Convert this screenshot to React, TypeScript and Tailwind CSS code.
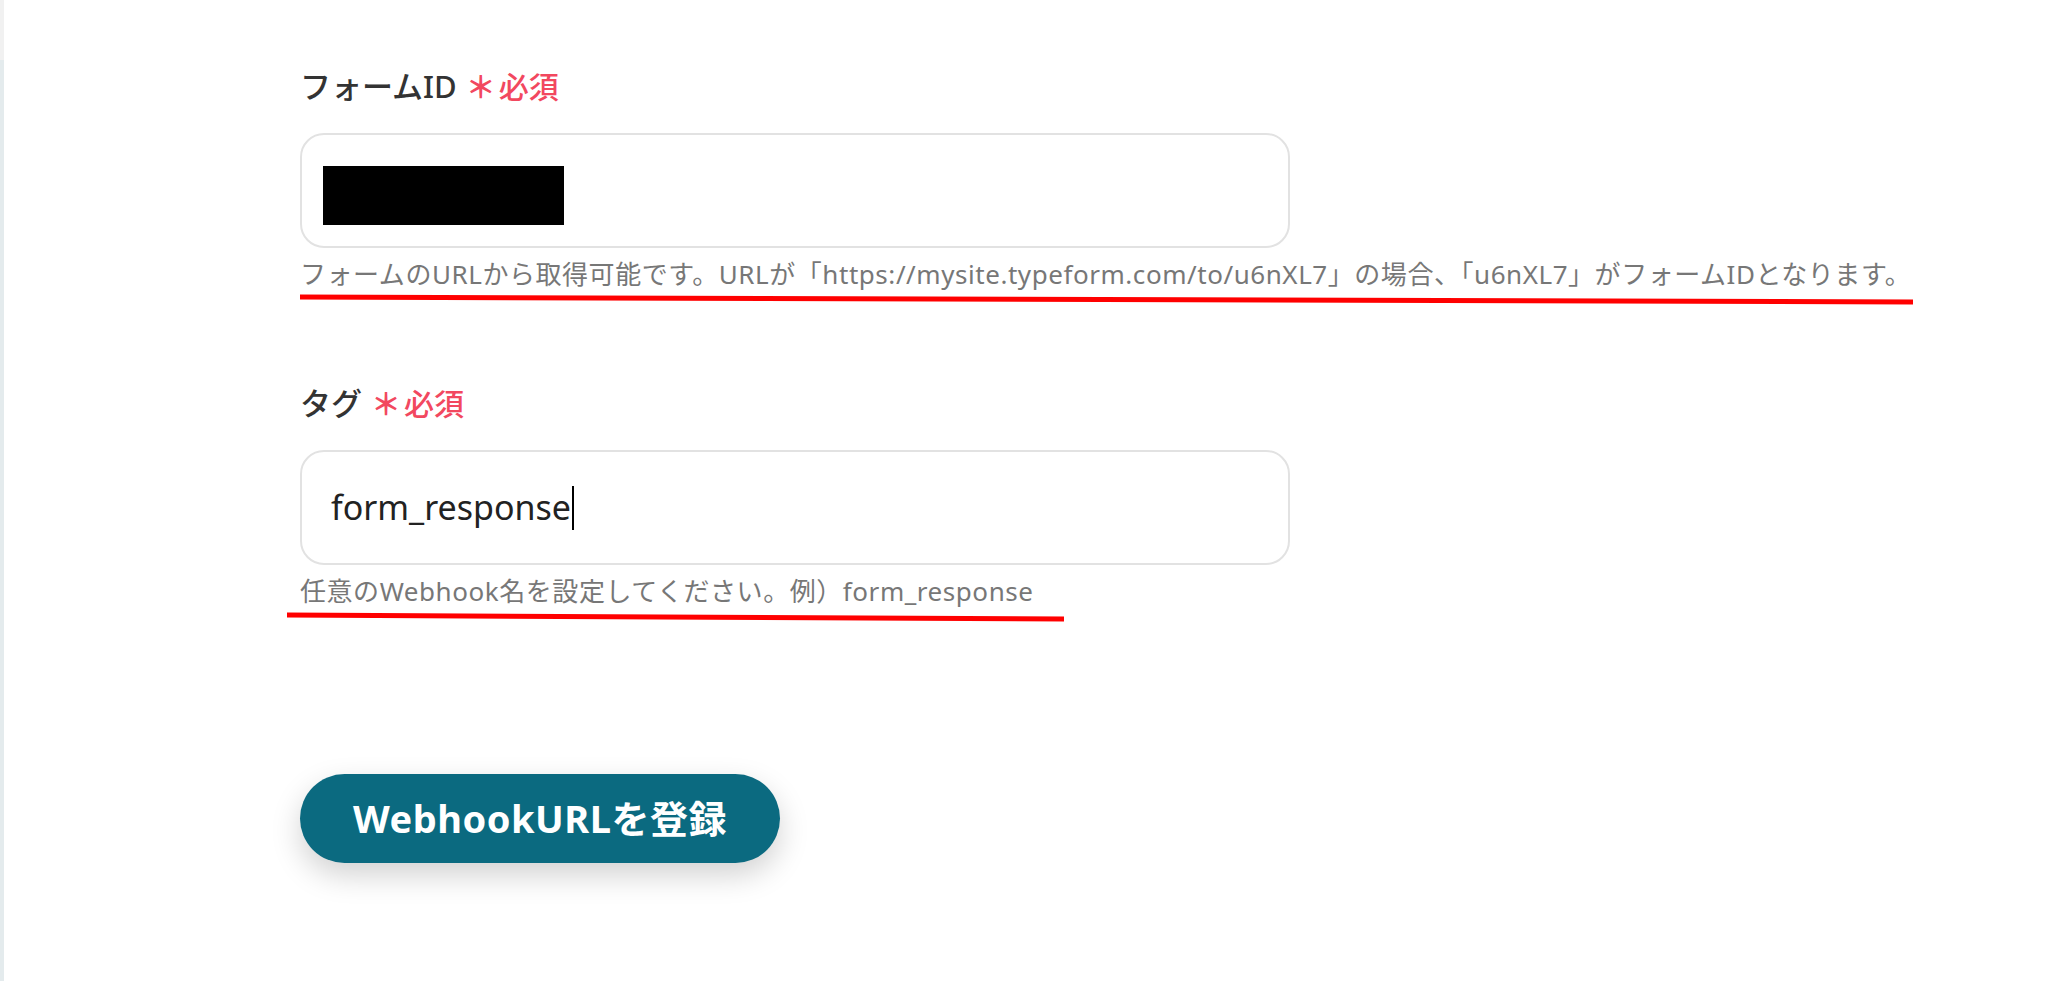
import React from 'react'

const font = { fontFamily: '"Noto Sans", "Noto Sans CJK JP", sans-serif' }

function Required() {
  return (
    <span className="flex items-center gap-[3px] text-[30px] font-medium text-[#f2485f]">
      <span className="font-bold">＊</span>
      <span>必須</span>
    </span>
  )
}

function Underline({ width, tilt }: { width: number; tilt: number }) {
  return (
    <svg width={width} height={14} className="block">
      <line x1={0} y1={5} x2={width} y2={5 + tilt} stroke="#ff0000" strokeWidth={5} />
    </svg>
  )
}

function Field({
  label,
  value,
  caret,
  help,
}: {
  label: string
  value?: string
  caret?: boolean
  help: string
}) {
  return (
    <div>
      <div className="flex h-[42px] items-center gap-[9px] text-[31px] font-medium text-[#333]">
        <span>{label}</span>
        <Required />
      </div>
      <div className="mt-[26px] flex h-[115px] w-[990px] items-center rounded-[24px] border-2 border-[#e2e2e2] bg-white px-[21px]">
        {value === undefined ? (
          <div className="mt-[10px] h-[59px] w-[241px] bg-black" />
        ) : (
          <span className="ml-[8px] flex items-center text-[34px] text-[#222]">
            {value}
            {caret && <span className="ml-[1px] inline-block h-[44px] w-[2px] bg-black" />}
          </span>
        )}
      </div>
      <p className="mt-[8px] h-[36px] whitespace-nowrap text-[26px] leading-[36px] tracking-[0.55px] text-[#777]">
        {help}
      </p>
    </div>
  )
}

export default function App() {
  return (
    <div className="flex h-[981px] w-full bg-white" style={font}>
      <div className="flex w-[4px] shrink-0 flex-col">
        <div className="h-[60px] bg-[#f1f1f1]" />
        <div className="flex-1 bg-[#e4ebed]" />
      </div>
      <main className="flex-1 pl-[296px] pt-[65px]">
        <Field
          label="フォームID"
          help="フォームのURLから取得可能です。URLが「https://mysite.typeform.com/to/u6nXL7」の場合、「u6nXL7」がフォームIDとなります。"
        />
        <Underline width={1613} tilt={5} />

        <div className="mt-[76px]">
          <Field
            label="タグ"
            value="form_response"
            caret
            help="任意のWebhook名を設定してください。例）form_response"
          />
          <div className="-ml-[13px] mt-[1px]">
            <Underline width={777} tilt={4} />
          </div>
        </div>

        <button
          type="button"
          className="mt-[150px] flex h-[89px] w-[480px] items-center justify-center rounded-full bg-[#0b6a80] text-[38px] font-bold tracking-[0.5px] text-white shadow-[0_12px_30px_rgba(0,0,0,0.18)]"
        >
          WebhookURLを登録
        </button>
      </main>
    </div>
  )
}
